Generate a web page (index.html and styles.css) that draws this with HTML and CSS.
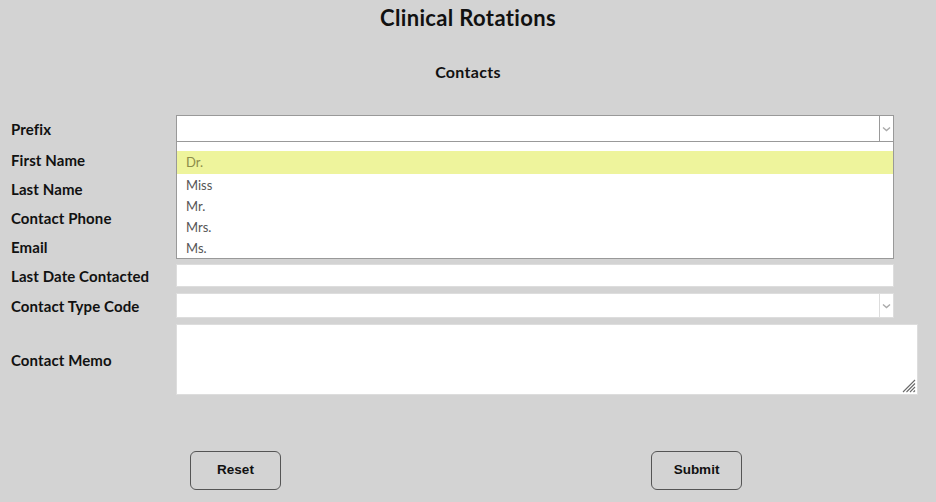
FILE: index.html
```html
<!DOCTYPE html>
<html lang="en">
<head>
<meta charset="utf-8">
<title>Clinical Rotations</title>
<link rel="stylesheet" href="styles.css">
</head>
<body>
<h1 class="title">Clinical Rotations</h1>
<h2 class="subtitle">Contacts</h2>
<form class="form">
  <label class="label">Prefix</label>
  <div class="field">
    <div class="select open">
      <span class="select-value"></span>
      <span class="select-arrow"><svg width="9" height="6" viewBox="0 0 9 6"><path d="M1 1.5 L4.5 4.5 L8 1.5" fill="none" stroke="#aaa" stroke-width="1.4"/></svg></span>
    </div>
    <ul class="options">
      <li class="option active">Dr.</li>
      <li class="option">Miss</li>
      <li class="option">Mr.</li>
      <li class="option">Mrs.</li>
      <li class="option">Ms.</li>
    </ul>
  </div>
  <label class="label">First Name</label>
  <div class="field"><input class="input" type="text"></div>
  <label class="label">Last Name</label>
  <div class="field"><input class="input" type="text"></div>
  <label class="label">Contact Phone</label>
  <div class="field"><input class="input" type="text"></div>
  <label class="label">Email</label>
  <div class="field"><input class="input" type="text"></div>
  <label class="label">Last Date Contacted</label>
  <div class="field"><input class="input" type="text"></div>
  <label class="label">Contact Type Code</label>
  <div class="field">
    <div class="select light">
      <span class="select-value"></span>
      <span class="select-arrow"><svg width="9" height="6" viewBox="0 0 9 6"><path d="M1 1.5 L4.5 4.5 L8 1.5" fill="none" stroke="#aaa" stroke-width="1.4"/></svg></span>
    </div>
  </div>
  <label class="label">Contact Memo</label>
  <div class="field">
    <textarea class="memo"></textarea>
    <svg class="grip" width="14" height="14" viewBox="0 0 14 14"><path d="M13 1 L1 13 M13 4.5 L4.5 13 M13 8 L8 13 M13 11.5 L11.5 13" stroke="#6a6a6a" stroke-width="1.1" fill="none"/></svg>
  </div>
</form>
<div class="actions">
  <button class="btn" type="button">Reset</button>
  <button class="btn" type="button">Submit</button>
</div>
</body>
</html>
```
FILE: styles.css
```css
html, body {
  margin: 0;
  padding: 0;
  background: #d3d3d3;
}
body {
  font-family: Lato, "Open Sans", sans-serif;
  color: #111;
  width: 936px;
  height: 502px;
  overflow: hidden;
}
.title {
  margin: 0;
  padding-top: 6px;
  font-size: 22px;
  line-height: 24px;
  font-weight: 700;
  letter-spacing: 0.35px;
  text-align: center;
}
.subtitle {
  margin: 32px 0 0;
  font-size: 16px;
  line-height: 20px;
  font-weight: 700;
  letter-spacing: 0.3px;
  text-align: center;
}
.form {
  margin-top: 33px;
  padding-left: 11px;
  display: grid;
  grid-template-columns: 165px 1fr;
  row-gap: 6px;
  align-items: center;
}
.label {
  font-size: 15px;
  font-weight: 700;
  line-height: 18px;
  letter-spacing: 0.1px;
}
.field {
  position: relative;
  display: flex;
}
.select {
  box-sizing: border-box;
  width: 718px;
  height: 27px;
  background: #fff;
  border: 1px solid #999;
  display: flex;
}
.select.light {
  height: 25px;
  border-color: #ddd;
}
.select-value {
  flex: 1;
}
.select-arrow {
  width: 13px;
  border-left: 1px solid #999;
  display: flex;
  align-items: center;
  justify-content: center;
}
.select.light .select-arrow {
  border-left-color: #ddd;
}
.options {
  position: absolute;
  left: 0;
  top: 100%;
  box-sizing: border-box;
  width: 718px;
  margin: 0;
  padding: 9px 0 0;
  list-style: none;
  background: #fff;
  border: 1px solid #999;
  border-top: none;
  z-index: 2;
}
.option {
  height: 21px;
  line-height: 22px;
  padding-left: 9px;
  font-size: 13px;
  color: #555;
}
.option.active {
  height: 23px;
  line-height: 23px;
  background: #eef49c;
  color: #8c8c4a;
}
.input {
  box-sizing: border-box;
  width: 718px;
  height: 23px;
  margin: 0;
  padding: 0 6px;
  background: #fff;
  border: 1px solid #ddd;
  outline: none;
}
.memo {
  box-sizing: border-box;
  width: 742px;
  height: 71px;
  margin: 0;
  padding: 4px 6px;
  background: #fff;
  border: 1px solid #ddd;
  outline: none;
  resize: none;
}
.grip {
  position: absolute;
  left: 726px;
  bottom: 2px;
}
.actions {
  margin-top: 56px;
  padding-left: 190px;
  display: flex;
  gap: 370px;
}
.btn {
  box-sizing: border-box;
  width: 91px;
  height: 39px;
  border: 1px solid #555;
  border-radius: 6px;
  background: transparent;
  font-family: "Liberation Sans", Arial, sans-serif;
  font-size: 13.5px;
  font-weight: 700;
  color: #111;
  padding: 0 0 3px;
}
```
